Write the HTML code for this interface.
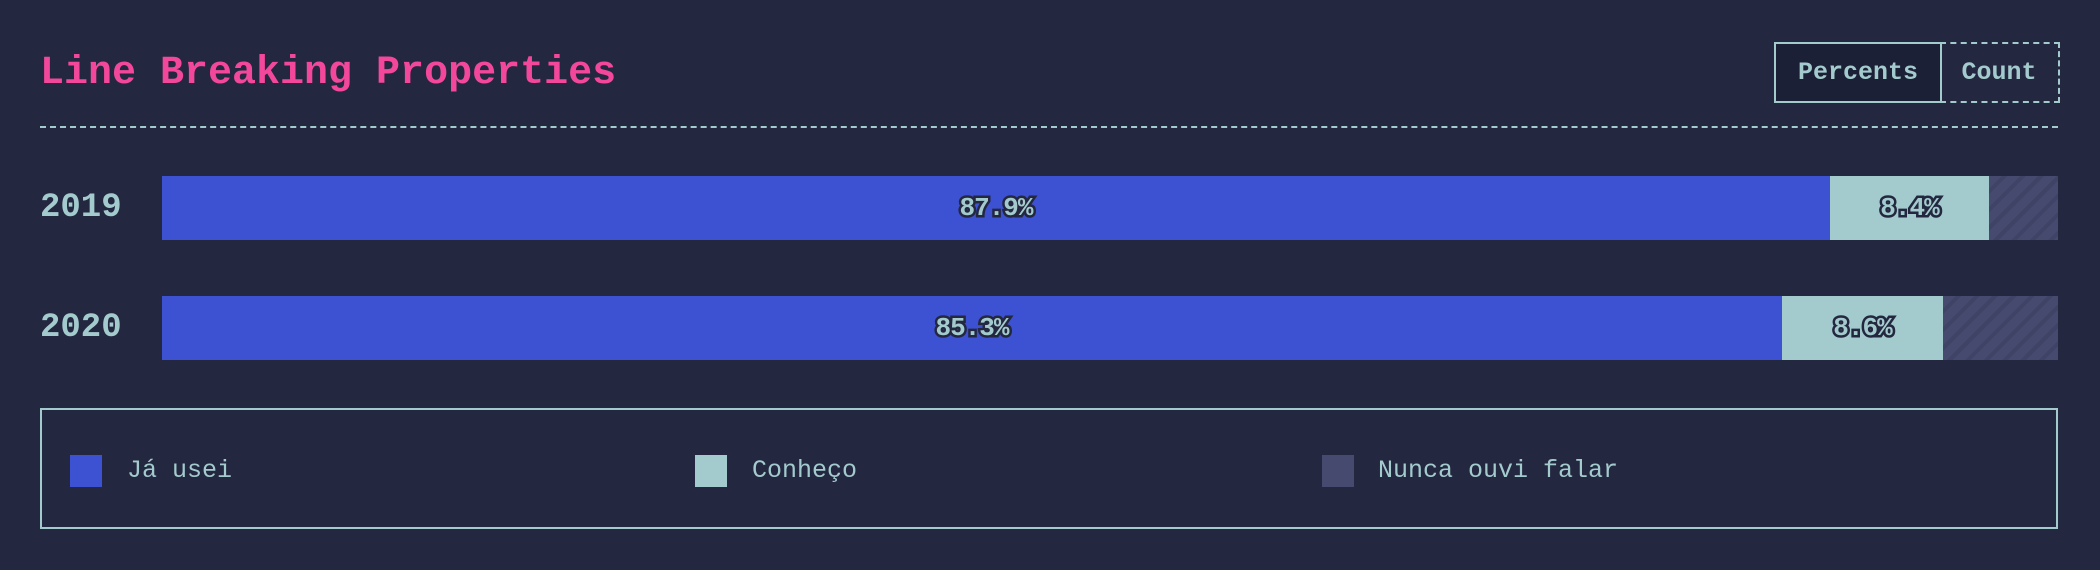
<!DOCTYPE html>
<html><head><meta charset="utf-8"><style>
*{margin:0;padding:0;box-sizing:border-box}
body{width:2100px;height:570px;background:#232740;font-family:"Liberation Mono",monospace;color:#a3cbcd;position:relative;overflow:hidden}
.title{position:absolute;left:40px;top:46px;font-size:40px;font-weight:bold;color:#f2479b;letter-spacing:0px;line-height:56px}
.dash{position:absolute;left:40px;top:126px;width:2018px;border-top:2px dashed #a3cbcd}
.btn{position:absolute;top:42px;height:61px;font-size:25px;font-weight:bold;line-height:57px;text-align:center}
.b1{left:1774px;width:168px;border:2px solid #a3cbcd;background:#1c2036}
.b2{left:1940px;width:120px;border:2px dashed #a3cbcd;border-left:none}
.year{position:absolute;left:40px;font-size:34px;font-weight:bold;line-height:64px;letter-spacing:0px}
.bar{position:absolute;left:162px;width:1896px;height:64px;display:flex}
.bar div{height:64px;display:flex;align-items:center;justify-content:center;font-size:26px;font-weight:bold;color:#a3cbcd;-webkit-text-stroke:5px #232740;paint-order:stroke fill;letter-spacing:-1px}
.a{background:#3d52d3}.c{background:#a3cbcd}
.n{flex:1;background:repeating-linear-gradient(135deg,#464a6e 0 9px,#3f4366 9px 13px)}
.legend{position:absolute;left:40px;top:408px;width:2018px;height:121px;border:2px solid #a3cbcd}
.sq{position:absolute;top:45px;width:32px;height:32px}
.lt{position:absolute;top:41px;font-size:25px;line-height:40px;color:#a3cbcd}
</style></head><body>
<div class="title">Line Breaking Properties</div>
<div class="btn b1">Percents</div><div class="btn b2">Count</div>
<div class="dash"></div>
<div class="year" style="top:176px">2019</div>
<div class="bar" style="top:176px"><div class="a" style="width:1668px">87.9%</div><div class="c" style="width:159px">8.4%</div><div class="n"></div></div>
<div class="year" style="top:296px">2020</div>
<div class="bar" style="top:296px"><div class="a" style="width:1620px">85.3%</div><div class="c" style="width:161px">8.6%</div><div class="n"></div></div>
<div class="legend">
<div class="sq" style="left:28px;background:#3d52d3"></div><div class="lt" style="left:85px">Já usei</div>
<div class="sq" style="left:653px;background:#a3cbcd"></div><div class="lt" style="left:710px">Conheço</div>
<div class="sq" style="left:1280px;background:#464a6e"></div><div class="lt" style="left:1336px">Nunca ouvi falar</div>
</div>
</body></html>
